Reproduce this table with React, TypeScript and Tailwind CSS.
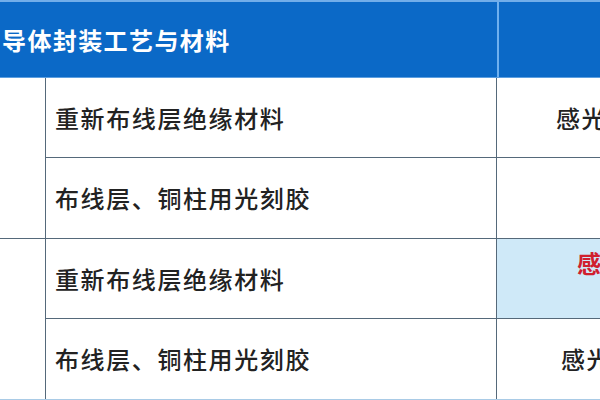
import React from "react";

const font = { fontFamily: '"Noto Sans CJK SC", "Noto Sans", sans-serif' };

function Row({ left, right, rightCls, bottom }: { left: string; right: React.ReactNode; rightCls: string; bottom: string }) {
  return (
    <div className={`flex h-[80px] ${bottom}`}>
      <div className="w-[451px] shrink-0 flex items-center pl-[9px] text-[24px] tracking-[1.6px] font-medium text-[#222] whitespace-nowrap border-r border-[#55697a]">
        {left}
      </div>
      <div className={`flex-1 overflow-hidden whitespace-nowrap ${rightCls}`}>{right}</div>
    </div>
  );
}

export default function App() {
  return (
    <div className="w-[600px] h-[400px] overflow-hidden bg-white" style={font}>
      <div className="h-[78px] flex bg-[#0b69c7] border-t-2 border-[#72aeea] border-b border-b-[#5d9fe0]">
        <div className="w-[497px] shrink-0 flex items-center pl-[2px] text-white font-bold text-[24px] tracking-[1.4px] whitespace-nowrap">
          导体封装工艺与材料
        </div>
        <div className="flex-1 border-l-2 border-[#6fb0ef]" />
      </div>
      <div className="flex border-b border-[#55697a]">
        <div className="w-[46px] shrink-0 border-r border-[#55697a]" />
        <div className="flex-1 flex flex-col">
          <Row
            left="重新布线层绝缘材料"
            bottom="border-b border-[#55697a] h-[80px]"
            rightCls="flex items-center pl-[59px] text-[24px] tracking-[1.6px] font-medium text-[#222]"
            right="感光"
          />
          <Row left="布线层、铜柱用光刻胶" bottom="h-[79px]" rightCls="" right="" />
        </div>
      </div>
      <div className="flex border-b-2 border-[#a9cbe6]">
        <div className="w-[46px] shrink-0 border-r border-[#55697a]" />
        <div className="flex-1 flex flex-col">
          <Row
            left="重新布线层绝缘材料"
            bottom="border-b border-[#55697a] h-[80px]"
            rightCls="bg-[#cfe9f8] pl-[80px] pt-[6px] text-[24px] text-[#d0202e] font-bold"
            right="感"
          />
          <Row
            left="布线层、铜柱用光刻胶"
            bottom="h-[79px]"
            rightCls="flex items-center pl-[64px] text-[24px] tracking-[1.6px] font-medium text-[#222]"
            right="感光"
          />
        </div>
      </div>
    </div>
  );
}
